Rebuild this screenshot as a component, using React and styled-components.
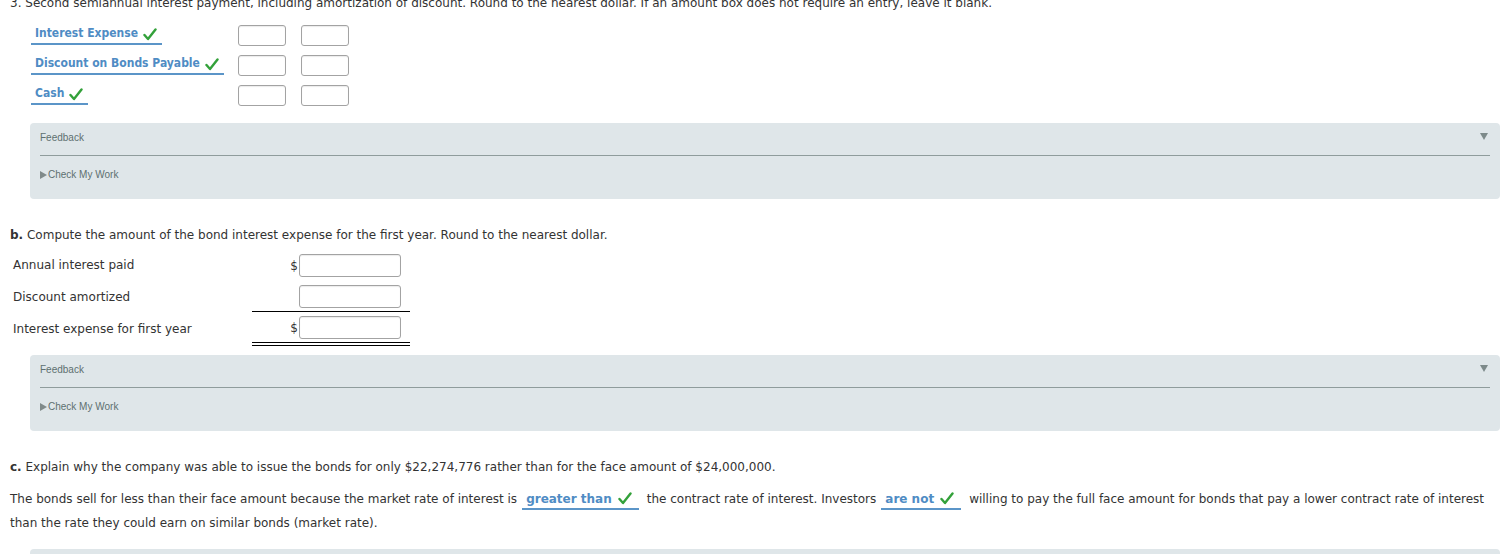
import React from "react";
import styled, { createGlobalStyle } from "styled-components";

const Global = createGlobalStyle`
  html, body { margin: 0; padding: 0; background: #fff; overflow: hidden; }
  body { font-family: "DejaVu Sans", Verdana, sans-serif; font-size: 12px; color: #333; }
`;

const Page = styled.div`
  width: 1500px;
  padding-left: 10px;
  box-sizing: border-box;
`;

const TopLine = styled.div`
  margin-top: -4px;
  line-height: 15px;
  white-space: nowrap;
`;

const Journal = styled.div`
  margin-top: 9px;
  padding-left: 21px;
  display: flex;
  flex-direction: column;
`;

const JRow = styled.div`
  display: grid;
  grid-template-columns: 192px 48px 48px;
  column-gap: 15px;
  align-items: center;
  height: 30px;
`;

const Select = styled.span`
  justify-self: start;
  display: inline-flex;
  align-items: center;
  gap: 5px;
  padding: 0 5px 2px 4px;
  border-bottom: 2px solid #5b95c8;
  color: #4f8cc4;
  font-family: "DejaVu Sans Condensed", "DejaVu Sans", Tahoma, sans-serif;
  font-weight: bold;
  line-height: 15px;
  white-space: nowrap;
`;

const InlineSelect = styled.span`
  display: inline-block;
  margin: 0 8px 0 5px;
  padding: 0 7px 0 4px;
  line-height: 17px;
  border-bottom: 2px solid #5b95c8;
  color: #4f8cc4;
  font-weight: bold;
  white-space: nowrap;
  svg { margin-left: 6px; vertical-align: -2px; }
`;

const Box = styled.div`
  width: ${p => p.$w || 48}px;
  height: ${p => p.$h || 21}px;
  box-sizing: border-box;
  border: 1px solid #a3a3a3;
  border-radius: 3px;
  background: #fff;
  box-shadow: inset 0 1px 1px rgba(0,0,0,0.08);
`;

const Check = () => (
  <svg width="14" height="13" viewBox="0 0 14 13" style={{ flex: "none", marginTop: 3 }}>
    <path d="M1.5 7 L5 11 L12.5 1.5" fill="none" stroke="#33a13a" strokeWidth="2.4" strokeLinecap="round" strokeLinejoin="round" />
  </svg>
);

const Panel = styled.div`
  position: relative;
  margin-left: 20px;
  margin-top: ${p => p.$mt}px;
  height: 76px;
  box-sizing: border-box;
  background: #dfe6e9;
  border-radius: 4px;
  padding: 9px 10px 0 10px;
  font-family: "Liberation Sans", Arial, sans-serif;
  font-size: 10px;
  color: #5e7070;
`;

const PanelTitle = styled.div`
  line-height: 12px;
  padding-bottom: 11px;
  border-bottom: 1px solid #8f9c9c;
`;

const PanelToggle = styled.div`
  margin-top: 13px;
  line-height: 12px;
  display: flex;
  align-items: center;
  gap: 1px;
`;

const Arrow = styled.span`
  display: inline-block;
  width: 0; height: 0;
  border-top: 4px solid transparent;
  border-bottom: 4px solid transparent;
  border-left: 7px solid #808a8a;
`;

const DownArrow = styled.span`
  position: absolute;
  right: 12px;
  top: 10px;
  width: 0; height: 0;
  border-left: 4px solid transparent;
  border-right: 4px solid transparent;
  border-top: 7px solid #7d8a8a;
`;

const Question = styled.div`
  margin-top: 28px;
  line-height: 16px;
  white-space: nowrap;
  b { color: #333; }
`;

const Table = styled.div`
  margin-top: 7px;
  padding-left: 3px;
  display: flex;
  flex-direction: column;
`;

const TRow = styled.div`
  display: grid;
  grid-template-columns: 239px 158px;
  align-items: stretch;
  margin-top: ${p => p.$mt || 0}px;
`;

const TLabel = styled.div`
  display: flex;
  align-items: center;
`;

const TCell = styled.div`
  display: flex;
  justify-content: flex-end;
  align-items: center;
  gap: 1px;
  padding: 4px 9px 3px 0;
  border-bottom: ${p => p.$rule === "single" ? "1px solid #000" : p.$rule === "double" ? "4px double #000" : "none"};
`;

const Dollar = styled.span`
  font-size: 12px;
  color: #333;
`;

const Para = styled.div`
  margin-top: 12px;
  line-height: 24px;
  width: 1482px;
`;

export default function App() {
  const journal = [
    "Interest Expense",
    "Discount on Bonds Payable",
    "Cash",
  ];
  return (
    <>
      <Global />
      <Page>
        <TopLine>
          3. Second semiannual interest payment, including amortization of discount. Round to the nearest dollar. If an amount box does not require an entry, leave it blank.
        </TopLine>
        <Journal>
          {journal.map(j => (
            <JRow key={j}>
              <Select>{j}<Check /></Select>
              <Box />
              <Box />
            </JRow>
          ))}
        </Journal>
        <Panel $mt={13}>
          <DownArrow />
          <PanelTitle>Feedback</PanelTitle>
          <PanelToggle><Arrow />Check My Work</PanelToggle>
        </Panel>

        <Question><b>b.</b> Compute the amount of the bond interest expense for the first year. Round to the nearest dollar.</Question>
        <Table>
          <TRow>
            <TLabel>Annual interest paid</TLabel>
            <TCell><Dollar>$</Dollar><Box $w={102} $h={23} /></TCell>
          </TRow>
          <TRow $mt={1}>
            <TLabel>Discount amortized</TLabel>
            <TCell $rule="single"><Box $w={102} $h={23} /></TCell>
          </TRow>
          <TRow>
            <TLabel>Interest expense for first year</TLabel>
            <TCell $rule="double"><Dollar>$</Dollar><Box $w={102} $h={23} /></TCell>
          </TRow>
        </Table>
        <Panel $mt={9}>
          <DownArrow />
          <PanelTitle>Feedback</PanelTitle>
          <PanelToggle><Arrow />Check My Work</PanelToggle>
        </Panel>

        <Question><b>c.</b> Explain why the company was able to issue the bonds for only $22,274,776 rather than for the face amount of $24,000,000.</Question>
        <Para>
          The bonds sell for less than their face amount because the market rate of interest is
          <InlineSelect>greater than<Check /></InlineSelect>
          the contract rate of interest. Investors
          <InlineSelect>are not<Check /></InlineSelect>
          willing to pay the full face amount for bonds that pay a lower contract rate of interest than the rate they could earn on similar bonds (market rate).
        </Para>
        <Panel $mt={14}>
          <DownArrow />
          <PanelTitle>Feedback</PanelTitle>
        </Panel>
      </Page>
    </>
  );
}
